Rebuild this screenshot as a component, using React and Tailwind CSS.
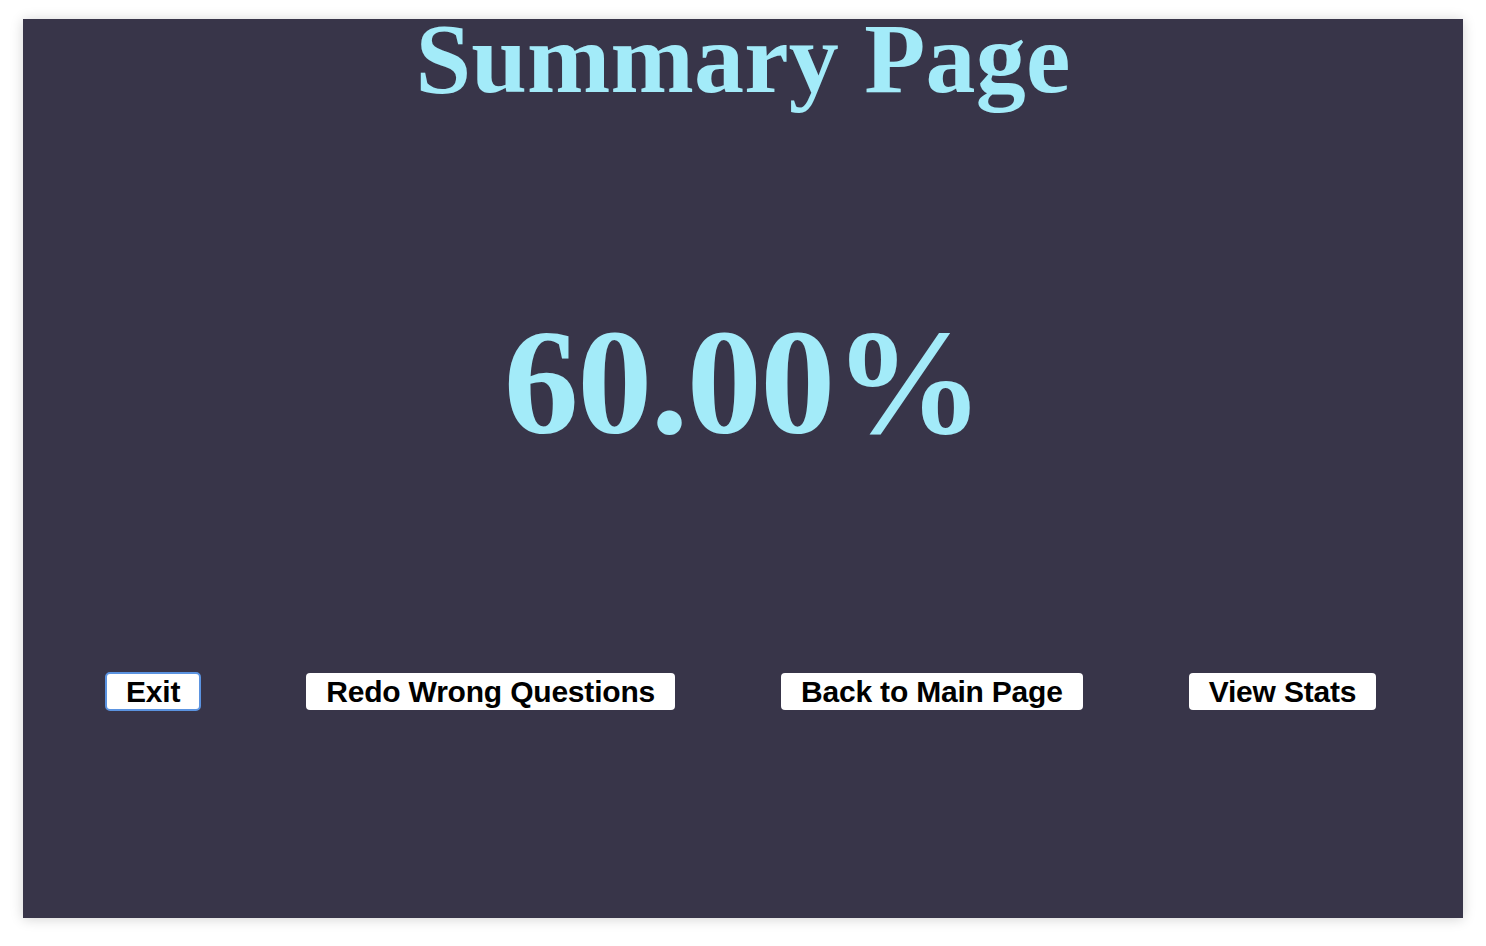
import React from "react";

const buttons = ["Exit", "Redo Wrong Questions", "Back to Main Page", "View Stats"];

const SummaryPage = () => {
  return (
    <div className="min-h-[946px] w-full bg-white pt-[19px] pl-[23px]">
      <div className="w-[1440px] h-[899px] bg-[#383549] shadow-[0_1px_12px_rgba(0,0,0,0.18)] flex flex-col items-center">
        <h1 className="font-['Liberation_Serif',serif] font-bold text-[100px] leading-[80px] tracking-[0.2px] text-[#a3ebf9] whitespace-nowrap">
          Summary Page
        </h1>

        <div className="mt-[208px] font-['Liberation_Serif',serif] font-bold text-[150px] leading-none tracking-[-1.5px] text-[#a3ebf9] whitespace-nowrap">
          60.00%
        </div>

        <div className="mt-[216px] flex justify-start items-center gap-[106px] w-full pl-[83px]">
          {buttons.map((label, i) => (
            <button
              key={label}
              type="button"
              className={`bg-white text-black rounded-[4px] px-[20px] py-[2px] font-['Liberation_Sans',Arial,sans-serif] font-bold text-[30px] leading-[33px] tracking-[-0.2px] whitespace-nowrap ${
                i === 0 ? "outline-2 outline-offset-[-1px] outline-[#5b93e0]" : ""
              }`}
            >
              {label}
            </button>
          ))}
        </div>
      </div>
    </div>
  );
};

export default function App() {
  return <SummaryPage />;
}
